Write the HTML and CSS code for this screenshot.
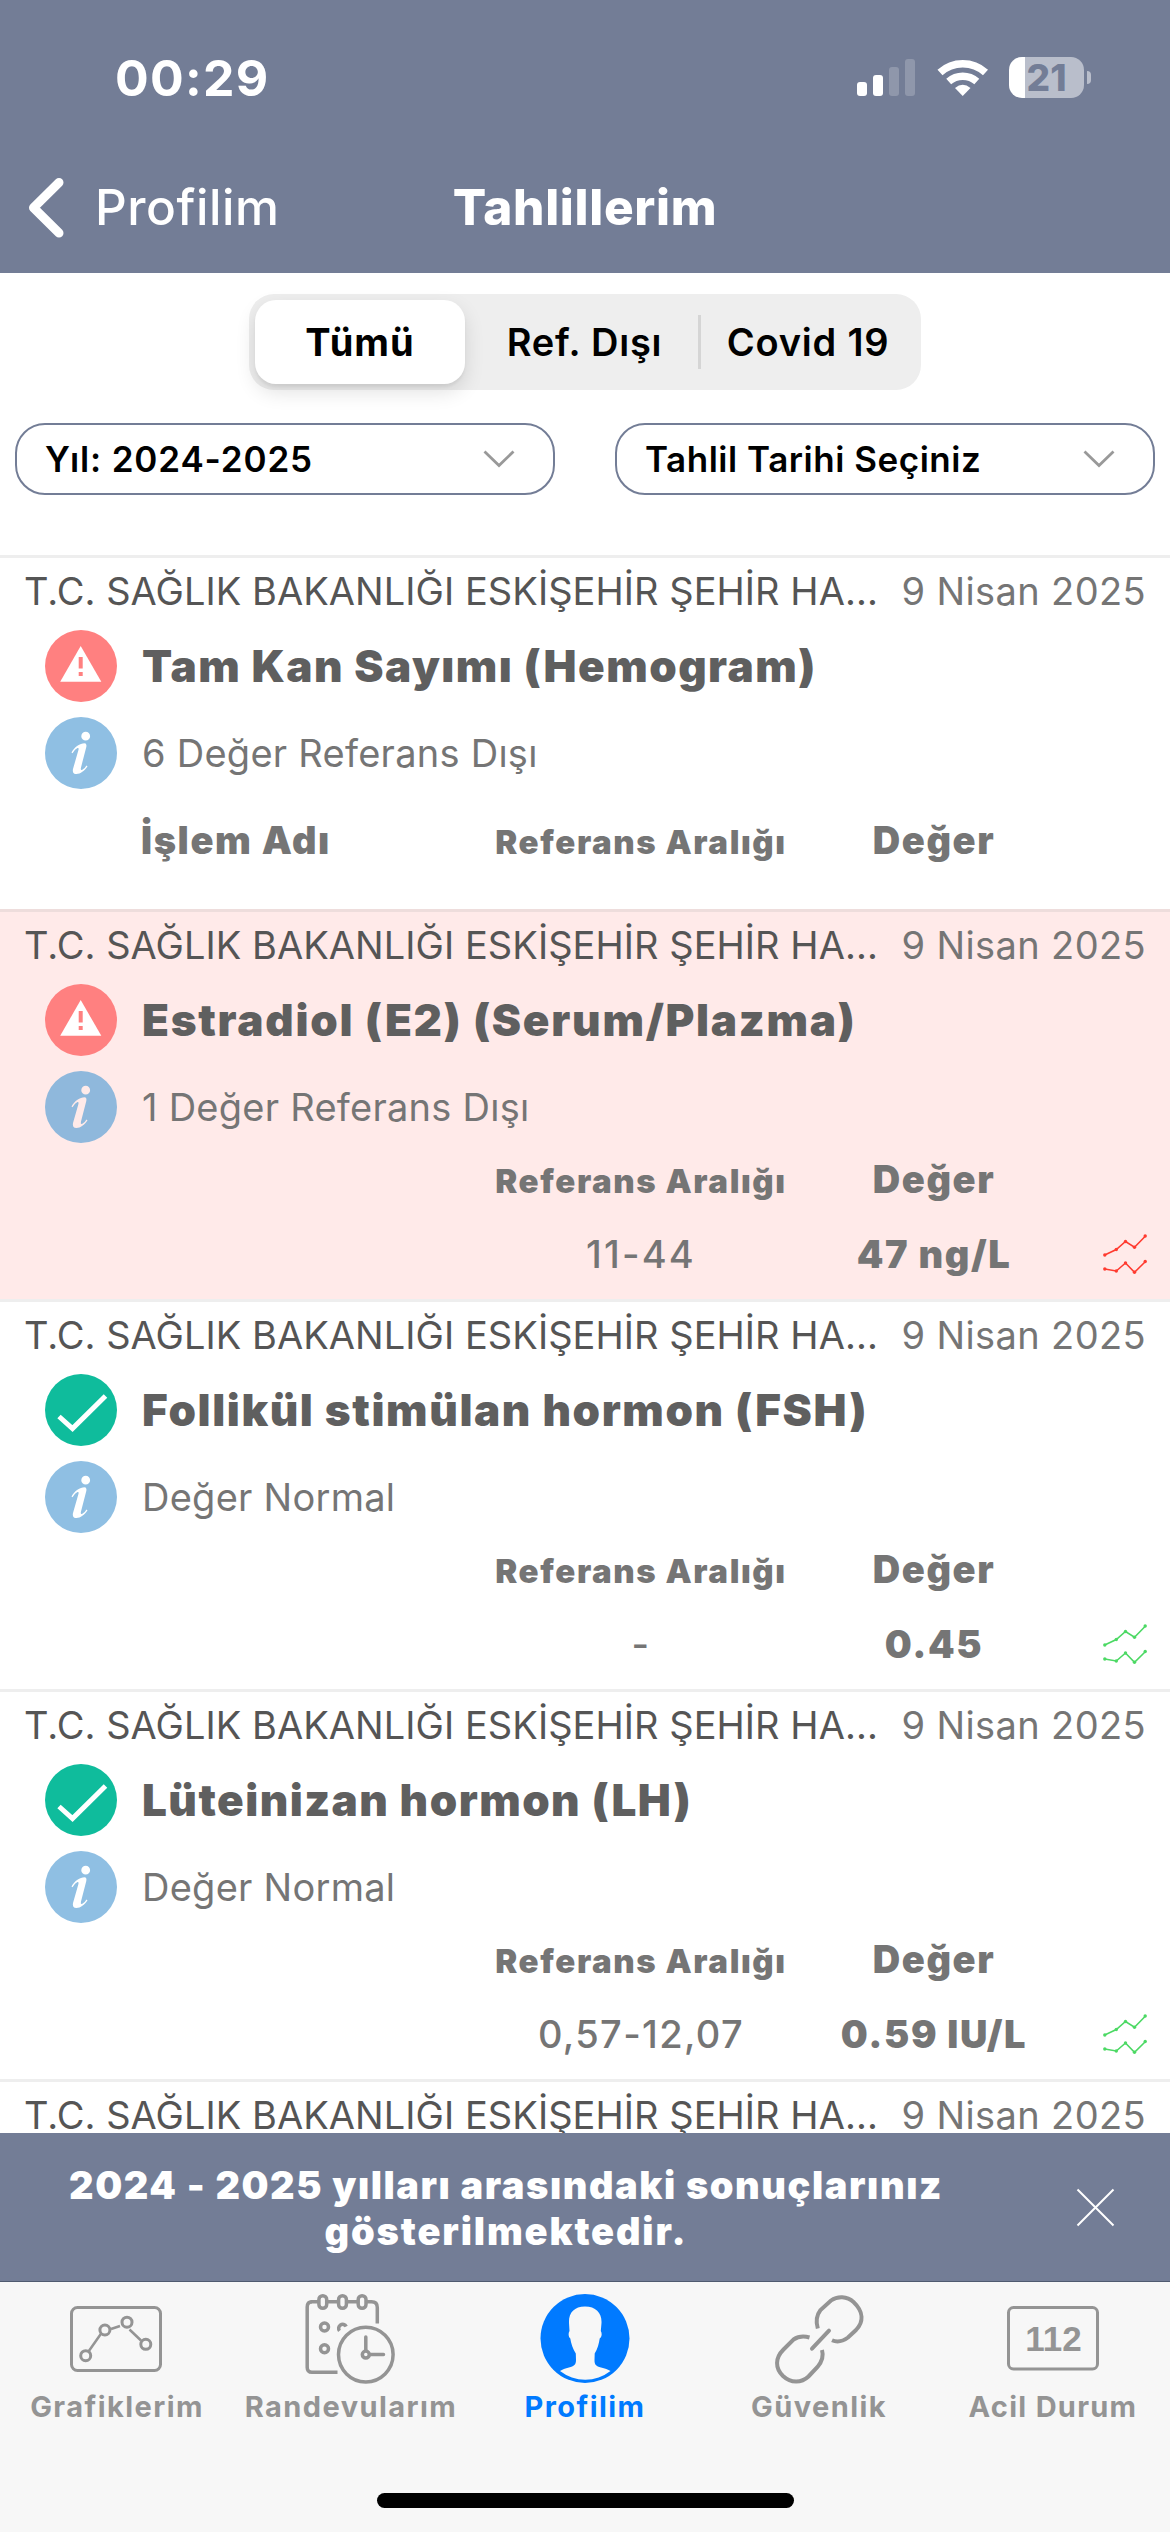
FILE: index.html
```html
<!DOCTYPE html>
<html lang="tr">
<head>
<meta charset="utf-8">
<title>Tahlillerim</title>
<link rel="stylesheet" href="styles.css">
</head>
<body>
<svg class="sprite" aria-hidden="true">
  <symbol id="warn" viewBox="0 0 72 72">
    <circle cx="36" cy="36" r="36" fill="#ff8080"/>
    <path d="M35.7 16 56.3 51.8H15.2z" fill="#fff"/>
    <path d="M33.7 27h4v11.5h-4zM33.7 42h4v4h-4z" fill="#ff8080"/>
  </symbol>
  <symbol id="ok" viewBox="0 0 72 72">
    <circle cx="36" cy="36" r="36" fill="#0fbc9c"/>
    <path d="M14 42.500 27.500 54.500 60.500 22" fill="none" stroke="#fff" stroke-width="5"/>
  </symbol>
  <symbol id="info" viewBox="0 0 72 72">
    <path fill="currentColor" fill-rule="evenodd" d="M36 0a36 36 0 1 0 0 72a36 36 0 1 0 0-72zM40.700 14.800a4.400 4.400 0 1 1-.01 8.800a4.400 4.400 0 1 1 .01-8.800zM26.500 35.500C29.500 30 35 26.300 39.500 26.300Q42 26.300 41.300 30L36 50.500Q35.300 53.500 37 53Q39.500 52 41.500 48.500L42.500 49.300C39.500 54 35.500 57 31.500 57Q27 57 28 52L33.300 33.500Q34.300 30.500 32.500 31Q30 32 27.500 36.200z"/>
  </symbol>
  <symbol id="trend" viewBox="0 0 44 40">
    <g fill="none" stroke="currentColor" stroke-width="1.600">
      <path d="M1.700 21 13.300 15.500 22.500 7.500 31.500 13.200 42.500 2"/>
      <path d="M1.700 35 13.300 37 22.500 29 31.500 38.300 42.500 27.500"/>
    </g>
    <g fill="currentColor">
      <circle cx="1.800" cy="21" r="1.700"/><circle cx="13.300" cy="15.500" r="1.700"/><circle cx="22.500" cy="7.500" r="1.700"/><circle cx="31.500" cy="13.200" r="1.700"/><circle cx="42.200" cy="2" r="1.700"/>
      <circle cx="1.800" cy="35" r="1.700"/><circle cx="13.300" cy="37" r="1.700"/><circle cx="22.500" cy="29" r="1.700"/><circle cx="31.500" cy="38.300" r="1.700"/><circle cx="42.200" cy="27.500" r="1.700"/>
    </g>
  </symbol>
</svg>

<header class="header">
  <div class="status">
    <span class="clock">00:29</span>
    <div class="indicators">
      <svg class="signal" width="58" height="38" viewBox="0 0 58 38" fill="#fff">
        <rect y="23" width="10" height="14" rx="3"/>
        <rect x="16" y="16" width="10" height="21" rx="3"/>
        <rect x="32" y="8" width="10" height="29" rx="3" opacity=".2"/>
        <rect x="48" y="0" width="10" height="37" rx="3" opacity=".2"/>
      </svg>
      <svg class="wifi" width="52" height="38" viewBox="0 0 52 38" fill="none" stroke="#fff">
        <path d="M3 13.500A34 34 0 0 1 48.500 13.500" stroke-width="7.500"/>
        <path d="M11.700 22.500A21.500 21.500 0 0 1 39.800 22.500" stroke-width="7.500"/>
        <path d="M18 29Q25.700 22.500 33.500 29L25.700 37z" fill="#fff" stroke="none"/>
      </svg>
      <div class="battery">21</div>
      <span class="battery-tip"></span>
    </div>
  </div>
  <nav class="navbar">
    <a class="back">
      <svg width="38" height="62" viewBox="0 0 38 62" fill="none" stroke="#fff" stroke-width="9" stroke-linecap="round" stroke-linejoin="round"><path d="M33 5.500 7.500 30.800 33 56"/></svg>
      <span>Profilim</span>
    </a>
    <h1>Tahlillerim</h1>
    <span></span>
  </nav>
</header>

<section class="filters">
  <div class="segments">
    <span class="seg active">Tümü</span>
    <span class="seg mid">Ref. Dışı</span>
    <span class="seg">Covid 19</span>
  </div>
  <div class="selects">
    <div class="select year"><span>Yıl: 2024-2025</span><svg width="32" height="18" viewBox="0 0 32 18"><path d="M1.500 1.500 16 15.500 30.500 1.500" fill="none" stroke="#999" stroke-width="2.800"/></svg></div>
    <div class="select"><span>Tahlil Tarihi Seçiniz</span><svg width="32" height="18" viewBox="0 0 32 18"><path d="M1.500 1.500 16 15.500 30.500 1.500" fill="none" stroke="#999" stroke-width="2.800"/></svg></div>
  </div>
</section>

<main class="results">
  <article class="result group">
    <div class="meta"><span class="org">T.C. SAĞLIK BAKANLIĞI ESKİŞEHİR ŞEHİR HA...</span><time>9 Nisan 2025</time></div>
    <div class="line"><svg class="badge"><use href="#warn"/></svg><h2 class="t1">Tam Kan Sayımı (Hemogram)</h2></div>
    <div class="line"><svg class="badge info"><use href="#info"/></svg><p>6 Değer Referans Dışı</p></div>
    <div class="cols heads"><b class="name">İşlem Adı</b><b class="small">Referans Aralığı</b><b>Değer</b></div>
  </article>

  <article class="result alert">
    <div class="meta"><span class="org">T.C. SAĞLIK BAKANLIĞI ESKİŞEHİR ŞEHİR HA...</span><time>9 Nisan 2025</time></div>
    <div class="line"><svg class="badge"><use href="#warn"/></svg><h2>Estradiol (E2) (Serum/Plazma)</h2></div>
    <div class="line"><svg class="badge info"><use href="#info"/></svg><p>1 Değer Referans Dışı</p></div>
    <div class="cols heads"><span></span><b class="small">Referans Aralığı</b><b>Değer</b></div>
    <div class="cols values"><span></span><span class="range narrow">11-44</span><b>47 ng/L</b><svg class="trend"><use href="#trend"/></svg></div>
  </article>

  <article class="result">
    <div class="meta"><span class="org">T.C. SAĞLIK BAKANLIĞI ESKİŞEHİR ŞEHİR HA...</span><time>9 Nisan 2025</time></div>
    <div class="line"><svg class="badge"><use href="#ok"/></svg><h2 class="t3">Follikül stimülan hormon (FSH)</h2></div>
    <div class="line"><svg class="badge info"><use href="#info"/></svg><p>Değer Normal</p></div>
    <div class="cols heads"><span></span><b class="small">Referans Aralığı</b><b>Değer</b></div>
    <div class="cols values"><span></span><span class="range">-</span><b>0.45</b><svg class="trend"><use href="#trend"/></svg></div>
  </article>

  <article class="result">
    <div class="meta"><span class="org">T.C. SAĞLIK BAKANLIĞI ESKİŞEHİR ŞEHİR HA...</span><time>9 Nisan 2025</time></div>
    <div class="line"><svg class="badge"><use href="#ok"/></svg><h2 class="t1">Lüteinizan hormon (LH)</h2></div>
    <div class="line"><svg class="badge info"><use href="#info"/></svg><p>Değer Normal</p></div>
    <div class="cols heads"><span></span><b class="small">Referans Aralığı</b><b>Değer</b></div>
    <div class="cols values"><span></span><span class="range">0,57-12,07</span><b>0.59 IU/L</b><svg class="trend"><use href="#trend"/></svg></div>
  </article>

  <article class="result">
    <div class="meta"><span class="org">T.C. SAĞLIK BAKANLIĞI ESKİŞEHİR ŞEHİR HA...</span><time>9 Nisan 2025</time></div>
  </article>
</main>

<aside class="banner">
  <p><span>2024 - 2025 yılları arasındaki sonuçlarınız</span><br><span class="wide">gösterilmektedir.</span></p>
  <svg width="39" height="39" viewBox="0 0 39 39" stroke="#fff" stroke-width="2"><path d="M1.500 1.500 37.500 37.500M37.500 1.500 1.500 37.500"/></svg>
</aside>

<footer class="tabbar">
  <nav class="tabs">
    <a class="tab">
      <svg width="98" height="94" viewBox="0 0 98 94" fill="none" stroke="#949494" stroke-width="3">
        <rect x="3.500" y="15.500" width="89" height="63" rx="6"/>
        <g stroke-width="2.500"><path d="M20.500 59.500 33.500 41M43 37 52 34M61.500 37.500 73 48.500"/></g>
        <circle cx="17.700" cy="63.700" r="5"/><circle cx="36.900" cy="38" r="5"/><circle cx="59" cy="30.200" r="5"/><circle cx="77.800" cy="52.300" r="5"/>
      </svg>
      <span>Grafiklerim</span>
    </a>
    <a class="tab">
      <svg width="98" height="94" viewBox="0 0 98 94" fill="none" stroke="#949494" stroke-width="3.500" stroke-linecap="round">
        <path d="M10 9.800Q5.200 10 5.200 15V75.500Q5.200 80.300 10 80.300H35.500" stroke-linecap="butt"/>
        <path d="M8.500 9.800H17M26 9.800H36M45.500 9.800H55.500M64.500 9.800H69.500Q75.300 9.800 75.300 15.500V31.500" stroke-linecap="butt"/>
        <rect x="16.900" y="3.700" width="7.800" height="12.600" rx="3.900"/><rect x="36.600" y="3.700" width="7.800" height="12.600" rx="3.900"/><rect x="56.200" y="3.700" width="7.800" height="12.600" rx="3.900"/>
        <circle cx="22.500" cy="35" r="4"/><circle cx="22.500" cy="56.700" r="4"/>
        <path d="M37.500 38.800A4 4 0 1 1 44.200 34.500" stroke-linecap="butt"/>
        <circle cx="63.800" cy="62.600" r="27.300"/><circle cx="63.800" cy="62.600" r="3.500"/>
        <path d="M63.800 58V45M68.500 62.600H81.500"/>
      </svg>
      <span>Randevularım</span>
    </a>
    <a class="tab current">
      <svg width="98" height="94" viewBox="0 0 98 94">
        <circle cx="49" cy="46.500" r="44.500" fill="#007aff"/>
        <path fill="#f7f7f7" d="M49 14.500C38 14.500 32.500 21 33 31L33.500 39C32 41.500 32.500 45 34.300 46.500C35 51.500 37 57 39.800 61.500L40 68C40 73 38 74 33 75.500C29 76.500 26.500 77.300 24 79A41 41 0 0 0 74.500 79C72 77.300 69 76.500 65 75.500C60 74 58.500 73 58.500 68L58.700 61.500C61.500 57 63 51.500 63.700 46.500C65.800 45 66.300 41.500 64.800 39L65.500 31C66 21 60 14.500 49 14.500z"/>
      </svg>
      <span>Profilim</span>
    </a>
    <a class="tab">
      <svg width="98" height="94" viewBox="0 0 98 94" fill="none" stroke="#949494" stroke-width="4">
        <path d="M47.800 36.500C45.800 30 46.300 23.500 50.500 18L61 8.500C67.500 3.800 77 4 83.500 10C94 20 93.500 30 86 38L78 45.500C72.500 49.500 67 50.500 62 48.200"/>
        <path d="M39.500 45.500C33.500 43.800 28 44.500 23.500 47.500L13.500 57.500C5 66 5 76 13 84C21 91.500 31.500 91 38.500 84.500L47.500 75C52.500 69 53.500 63 52 58"/>
        <path d="M42 56.700 59 38.700" stroke-linecap="round"/>
      </svg>
      <span>Güvenlik</span>
    </a>
    <a class="tab">
      <svg width="98" height="94" viewBox="0 0 98 94">
        <rect x="4.500" y="15.500" width="89" height="61.500" rx="5" fill="none" stroke="#949494" stroke-width="3"/>
        <text class="num" x="49.500" y="59" text-anchor="middle">112</text>
      </svg>
      <span class="acil">Acil Durum</span>
    </a>
  </nav>
  <span class="home"></span>
</footer>
</body>
</html>
```
FILE: styles.css
```css
* { box-sizing: border-box; }
body {
  margin: 0;
  width: 1170px;
  height: 2532px;
  overflow: hidden;
  display: flex;
  flex-direction: column;
  background: #fff;
  font-family: Inter, "Liberation Sans", sans-serif;
}
h1, h2, p { margin: 0; }
svg { display: block; flex: none; }
.sprite { position: absolute; width: 0; height: 0; }

/* Header */
.header { height: 273px; flex: none; background: #737d96; color: #fff; }
.status {
  height: 141px;
  padding: 18px 79px 0 115px;
  display: flex;
  justify-content: space-between;
}
.clock { font-weight: 700; font-size: 50px; line-height: 120px; letter-spacing: 1.3px; }
.indicators { display: flex; align-items: flex-start; padding-top: 39px; }
.signal { margin: 2px 22px 0 0; }
.wifi { margin: 2px 20px 0 0; }
.battery {
  width: 75px;
  height: 41px;
  border-radius: 13px;
  background: linear-gradient(90deg, #fff 16px, #b9becb 16px);
  color: #737d96;
  font-weight: 800;
  font-size: 37px;
  line-height: 41px;
  text-align: center;
}
.battery-tip {
  width: 4px;
  height: 13px;
  margin: 14px 0 0 3px;
  border-radius: 0 4px 4px 0;
  background: #b9becb;
}
.navbar {
  height: 132px;
  padding: 0 26px;
  display: grid;
  grid-template-columns: 1fr auto 1fr;
}
.back { display: flex; gap: 31px; padding-top: 36px; }
.back span { margin-top: -7px; font-weight: 500; font-size: 49.5px; line-height: 74px; letter-spacing: .54px; }
h1 { padding-top: 29px; font-weight: 800; font-size: 49.5px; line-height: 74px; letter-spacing: .68px; }

/* Filters */
.filters { height: 282px; flex: none; padding: 21px 15px 0; }
.segments {
  width: 672px;
  height: 96px;
  margin: 0 auto;
  padding: 6px;
  border-radius: 25px;
  background: #eee;
  display: flex;
  align-items: center;
}
.seg {
  flex: 1;
  text-align: center;
  font-weight: 600;
  font-size: 38px;
  line-height: 84px;
  letter-spacing: .8px;
  color: #000;
}
.seg.active {
  flex: 0 0 210px;
  font-weight: 700;
  letter-spacing: 1px;
  border-radius: 21px;
  background: #fff;
  box-shadow: 0 8px 20px rgba(0, 0, 0, .12), 0 3px 3px rgba(0, 0, 0, .05);
}
.seg.mid { flex: 0 0 236px; padding-left: 6px; line-height: 54px; border-right: 3px solid #d5d5d5; }
.selects { display: grid; grid-template-columns: 540px 540px; justify-content: space-between; margin-top: 33px; }
.select {
  height: 72px;
  padding: 0 38px 0 28px;
  border: 2px solid #737d96;
  border-radius: 30px;
  display: flex;
  align-items: center;
  justify-content: space-between;
  font-weight: 600;
  font-size: 35px;
  letter-spacing: .53px;
}
.year { letter-spacing: .85px; }

/* Results */
.results { flex: 1; min-height: 0; overflow: hidden; }
.result { height: 390px; padding-top: 3px; border-top: 3px solid #eee; color: #757575; }
.result.group { height: 354px; }
.result.alert { background: #ffeae9; border-top-color: #eedddc; }
.meta {
  height: 60px;
  padding: 0 24px;
  display: flex;
  justify-content: space-between;
  font-size: 38px;
  line-height: 60px;
  white-space: nowrap;
}
.org { color: #555; letter-spacing: .05px; }
.meta time { letter-spacing: .37px; }
.line { height: 72px; margin-top: 9px; padding-left: 45px; display: flex; align-items: center; gap: 25px; }
.line + .line { margin-top: 15px; }
.badge { width: 72px; height: 72px; }
.badge.info { color: #8fbfe3; }
.alert .badge.info { color: #8fb8dc; }
h2 { font-weight: 900; font-size: 44px; line-height: 72px; letter-spacing: 1.73px; color: #5f5f5f; white-space: nowrap; }
h2.t1 { letter-spacing: 1.47px; }
h2.t3 { letter-spacing: 1.6px; }
.line p { font-size: 38px; line-height: 72px; letter-spacing: .26px; }
.cols {
  display: grid;
  grid-template-columns: 354px 290px 296px 44px;
  height: 46px;
  padding-left: 142px;
  align-items: baseline;
  justify-items: center;
  font-size: 38px;
  line-height: 46px;
  white-space: nowrap;
}
.cols b { font-weight: 900; letter-spacing: 1.6px; }
.cols b.small { font-size: 33px; }
.cols .name { justify-self: start; margin-left: -1px; }
.heads { margin-top: 13px; }
.group .heads { margin-top: 28px; }
.values { margin-top: 29px; }
.range { font-weight: 500; letter-spacing: 1.35px; }
.range.narrow { letter-spacing: 2.2px; }
.trend { width: 44px; height: 40px; margin-left: 42px; align-self: start; margin-top: 3px; color: #4cd964; }
.alert .trend { color: #ff3b30; }

/* Notice */
.banner {
  height: 149px;
  flex: none;
  padding: 29px 55px 0 0;
  border-bottom: 1px solid #4f5a70;
  background: #737d96;
  color: #fff;
  display: flex;
  justify-content: space-between;
}
.banner p { width: 1012px; text-align: center; font-weight: 900; font-size: 38px; line-height: 46px; letter-spacing: 1.56px; }
.banner .wide { letter-spacing: 1.86px; }
.banner svg { margin-top: 26px; }

/* Tab bar */
.tabbar { height: 250px; flex: none; background: #f7f7f7; display: flex; flex-direction: column; align-items: center; }
.tabs { width: 100%; height: 211px; padding-top: 10px; display: grid; grid-template-columns: repeat(5, 1fr); }
.tab { display: flex; flex-direction: column; align-items: center; color: #949494; }
.tab span { margin-top: 3px; font-weight: 700; font-size: 29px; line-height: 36px; letter-spacing: 1.43px; }
.tab .acil { letter-spacing: 1.28px; }
.tab.current { color: #007aff; }
.num { font: 700 35px "Liberation Sans", sans-serif; fill: #949494; }
.home { width: 417px; height: 15px; border-radius: 8px; background: #000; }
```
